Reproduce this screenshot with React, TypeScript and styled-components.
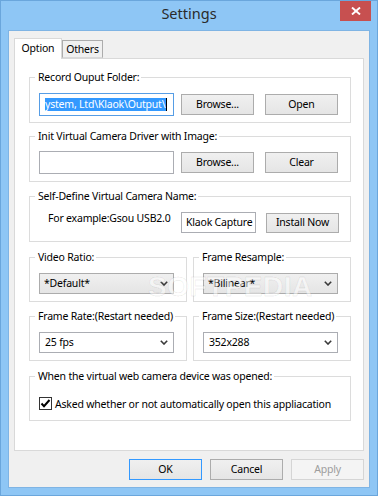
import React from "react";
import styled, { createGlobalStyle } from "styled-components";

const GlobalStyle = createGlobalStyle`
  html, body { margin: 0; padding: 0; }
  body {
    width: 378px;
    height: 496px;
    overflow: hidden;
    font-family: "Noto Sans", "Liberation Sans", sans-serif;
    font-size: 10.5px;
    letter-spacing: -0.2px;
    color: #000;
  }
  * { box-sizing: border-box; }
`;

const Window = styled.div`
  width: 378px;
  height: 496px;
  background: #8ec6f5;
  border: 1px solid #6aa6dc;
  padding: 0 7px 7px 7px;
  display: flex;
  flex-direction: column;
`;

const TitleBar = styled.div`
  height: 29px;
  display: grid;
  grid-template-columns: 1fr auto 1fr;
  align-items: start;
`;

const Title = styled.div`
  grid-column: 2;
  font-size: 14.5px;
  letter-spacing: 0;
  line-height: 25px;
  color: #2a2a2a;
`;

const CloseButton = styled.div`
  grid-column: 3;
  justify-self: end;
  margin-right: -1px;
  width: 31px;
  height: 20px;
  background: #c75050;
  display: flex;
  align-items: center;
  justify-content: center;
`;

const Client = styled.div`
  flex: 1;
  background: #f0f0f0;
  border: 1px solid #7fb4e4;
  padding: 7px 5px 7px 5px;
  display: flex;
  flex-direction: column;
`;

const TabStrip = styled.div`
  height: 20px;
  display: flex;
  align-items: flex-end;
  position: relative;
  z-index: 1;
`;

const Tab = styled.div<{ $active?: boolean; $w: number }>`
  width: ${(p) => p.$w}px;
  height: ${(p) => (p.$active ? 21 : 18)}px;
  margin-bottom: ${(p) => (p.$active ? -1 : 0)}px;
  background: ${(p) => (p.$active ? "#fff" : "#f0f0f0")};
  border: 1px solid ${(p) => (p.$active ? "#d9d9d9" : "#acacac")};
  border-bottom: ${(p) => (p.$active ? "none" : "1px solid #d9d9d9")};
  display: flex;
  justify-content: center;
  line-height: ${(p) => (p.$active ? 15 : 14)}px;
  padding-top: ${(p) => (p.$active ? 2 : 1)}px;
`;

const Panel = styled.div`
  position: relative;
  flex: 1;
  background: #fff;
  border: 1px solid #d9d9d9;
  padding: 18px 12px 0 14px;
  display: flex;
  flex-direction: column;
`;

const GroupBox = styled.div<{ $h: number; $mt?: number; $pt: number }>`
  position: relative;
  height: ${(p) => p.$h}px;
  margin-top: ${(p) => p.$mt ?? 0}px;
  border: 1px solid #dcdcdc;
  padding: ${(p) => p.$pt}px 11px 0 9px;
`;

const Legend = styled.span`
  position: absolute;
  top: -8px;
  left: 5px;
  padding: 0 2px 0 3px;
  background: #fff;
  line-height: 14px;
  white-space: nowrap;
`;

const Pair = styled.div<{ $mt: number }>`
  margin-top: ${(p) => p.$mt}px;
  display: grid;
  grid-template-columns: 1fr 1fr;
  gap: 6px;
`;

const Row = styled.div<{ $h: number }>`
  display: flex;
  align-items: center;
  height: ${(p) => p.$h}px;
`;

const Field = styled.div<{ $w: number; $h: number; $focused?: boolean }>`
  width: ${(p) => p.$w}px;
  height: ${(p) => p.$h}px;
  flex: none;
  border: 1px solid ${(p) => (p.$focused ? "#569de5" : "#abadb3")};
  background: #fff;
  padding: 0 3px 0 ${(p) => (p.$focused ? 5 : 4)}px;
  display: flex;
  align-items: center;
  overflow: hidden;
  white-space: nowrap;
  line-height: 13px;
`;

const Selected = styled.span`
  background: #3399ff;
  color: #fff;
  padding-right: 1px;
`;

const Caret = styled.span`
  display: inline-block;
  width: 1px;
  height: 13px;
  background: #000;
`;

const Button = styled.div<{ $h?: number; $ml?: number; $default?: boolean; $disabled?: boolean }>`
  width: 73px;
  height: ${(p) => p.$h ?? 21}px;
  flex: none;
  margin-left: ${(p) => p.$ml ?? 0}px;
  border: 1px solid
    ${(p) => (p.$default ? "#3399ff" : p.$disabled ? "#d5d5d5" : "#acacac")};
  background: ${(p) => (p.$disabled ? "#f4f4f4" : "linear-gradient(#f0f0f0, #e5e5e5)")};
  color: ${(p) => (p.$disabled ? "#9d9d9d" : "#000")};
  display: flex;
  align-items: center;
  justify-content: center;
  line-height: 13px;
`;

const Hint = styled.div`
  flex: 1;
  align-self: flex-start;
  margin-top: -1px;
  padding-left: 9px;
  line-height: 14px;
  white-space: nowrap;
`;

const Select = styled.div<{ $flat?: boolean }>`
  width: 135px;
  height: 21px;
  display: flex;
  align-items: center;
  justify-content: space-between;
  padding: 0 5px 0 ${(p) => (p.$flat ? 5 : 4)}px;
  border: 1px solid ${(p) => (p.$flat ? "#abadb3" : "#acacac")};
  background: ${(p) => (p.$flat ? "#fff" : "linear-gradient(#f0f0f0, #e5e5e5)")};
  line-height: 13px;
`;

const CheckBox = styled.div`
  width: 13px;
  height: 13px;
  flex: none;
  border: 1px solid #333;
  background: #fff;
  display: flex;
  align-items: center;
  justify-content: center;
`;

const CheckLabel = styled.span`
  margin-left: 3px;
  line-height: 14px;
  white-space: nowrap;
`;

const ButtonRow = styled.div`
  margin-top: 8px;
  height: 21px;
  display: flex;
  justify-content: flex-end;
  gap: 8px;
`;

const Watermark = styled.div`
  position: absolute;
  left: 133px;
  top: 214px;
  font-family: "Liberation Sans", sans-serif;
  font-weight: bold;
  font-size: 28px;
  line-height: 28px;
  color: rgba(255, 255, 255, 0.5);
  -webkit-text-stroke: 1px rgba(0, 0, 0, 0.07);
  pointer-events: none;
  letter-spacing: 0.5px;
`;

const Chevron = () => (
  <svg width="8" height="5" viewBox="0 0 8 5">
    <polyline points="0.8,0.8 4,4 7.2,0.8" fill="none" stroke="#3a3a3a" strokeWidth="1.6" />
  </svg>
);

const Group: React.FC<{
  label: string;
  h: number;
  pt: number;
  mt?: number;
  children: React.ReactNode;
}> = ({ label, h, pt, mt, children }) => (
  <GroupBox $h={h} $pt={pt} $mt={mt}>
    <Legend>{label}</Legend>
    {children}
  </GroupBox>
);

export default function App() {
  return (
    <>
      <GlobalStyle />
      <Window>
        <TitleBar>
          <Title>Settings</Title>
          <CloseButton>
            <svg width="10" height="8" viewBox="0 0 10 8">
              <path d="M1 0.5 L9 7.5 M9 0.5 L1 7.5" stroke="#fff" strokeWidth="1.9" />
            </svg>
          </CloseButton>
        </TitleBar>
        <Client>
          <TabStrip>
            <Tab $active $w={48}>Option</Tab>
            <Tab $w={41}>Others</Tab>
          </TabStrip>
          <Panel>
            <Group label="Record Ouput Folder:" h={46} pt={15}>
              <Row $h={23}>
                <Field $w={135} $h={23} $focused>
                  <Selected>{"ystem, Ltd\\Klaok\\Output\\"}</Selected>
                  <Caret />
                </Field>
                <Button $ml={7}>Browse...</Button>
                <Button $ml={11}>Open</Button>
              </Row>
            </Group>
            <Group label="Init Virtual Camera Driver with Image:" h={46} pt={14} mt={13}>
              <Row $h={23}>
                <Field $w={135} $h={23} />
                <Button $ml={7}>Browse...</Button>
                <Button $ml={11}>Clear</Button>
              </Row>
            </Group>
            <Group label="Self-Define Virtual Camera Name:" h={46} pt={15} mt={14}>
              <Row $h={21}>
                <Hint>For example:Gsou USB2.0</Hint>
                <Field $w={75} $h={21}>Klaok Capture</Field>
                <Button $ml={10} $h={20}>Install Now</Button>
              </Row>
            </Group>
            <Pair $mt={15}>
              <Group label="Video Ratio:" h={45} pt={15}>
                <Select>
                  <span>*Default*</span>
                  <Chevron />
                </Select>
              </Group>
              <Group label="Frame Resample:" h={45} pt={15}>
                <Select>
                  <span>*Bilinear*</span>
                  <Chevron />
                </Select>
              </Group>
            </Pair>
            <Pair $mt={14}>
              <Group label="Frame Rate:(Restart needed)" h={45} pt={15}>
                <Select $flat>
                  <span>25 fps</span>
                  <Chevron />
                </Select>
              </Group>
              <Group label="Frame Size:(Restart needed)" h={45} pt={15}>
                <Select $flat>
                  <span>352x288</span>
                  <Chevron />
                </Select>
              </Group>
            </Pair>
            <Group label="When the virtual web camera device was opened:" h={45} pt={20} mt={15}>
              <Row $h={13}>
                <CheckBox>
                  <svg width="11" height="11" viewBox="0 0 11 11">
                    <polyline points="1.5,5.5 4,8.2 9.5,2" fill="none" stroke="#000" strokeWidth="2" />
                  </svg>
                </CheckBox>
                <CheckLabel>Asked whether or not automatically open this appliacation</CheckLabel>
              </Row>
            </Group>
            <Watermark>SOFTPEDIA</Watermark>
          </Panel>
          <ButtonRow>
            <Button $default>OK</Button>
            <Button>Cancel</Button>
            <Button $disabled>Apply</Button>
          </ButtonRow>
        </Client>
      </Window>
    </>
  );
}
